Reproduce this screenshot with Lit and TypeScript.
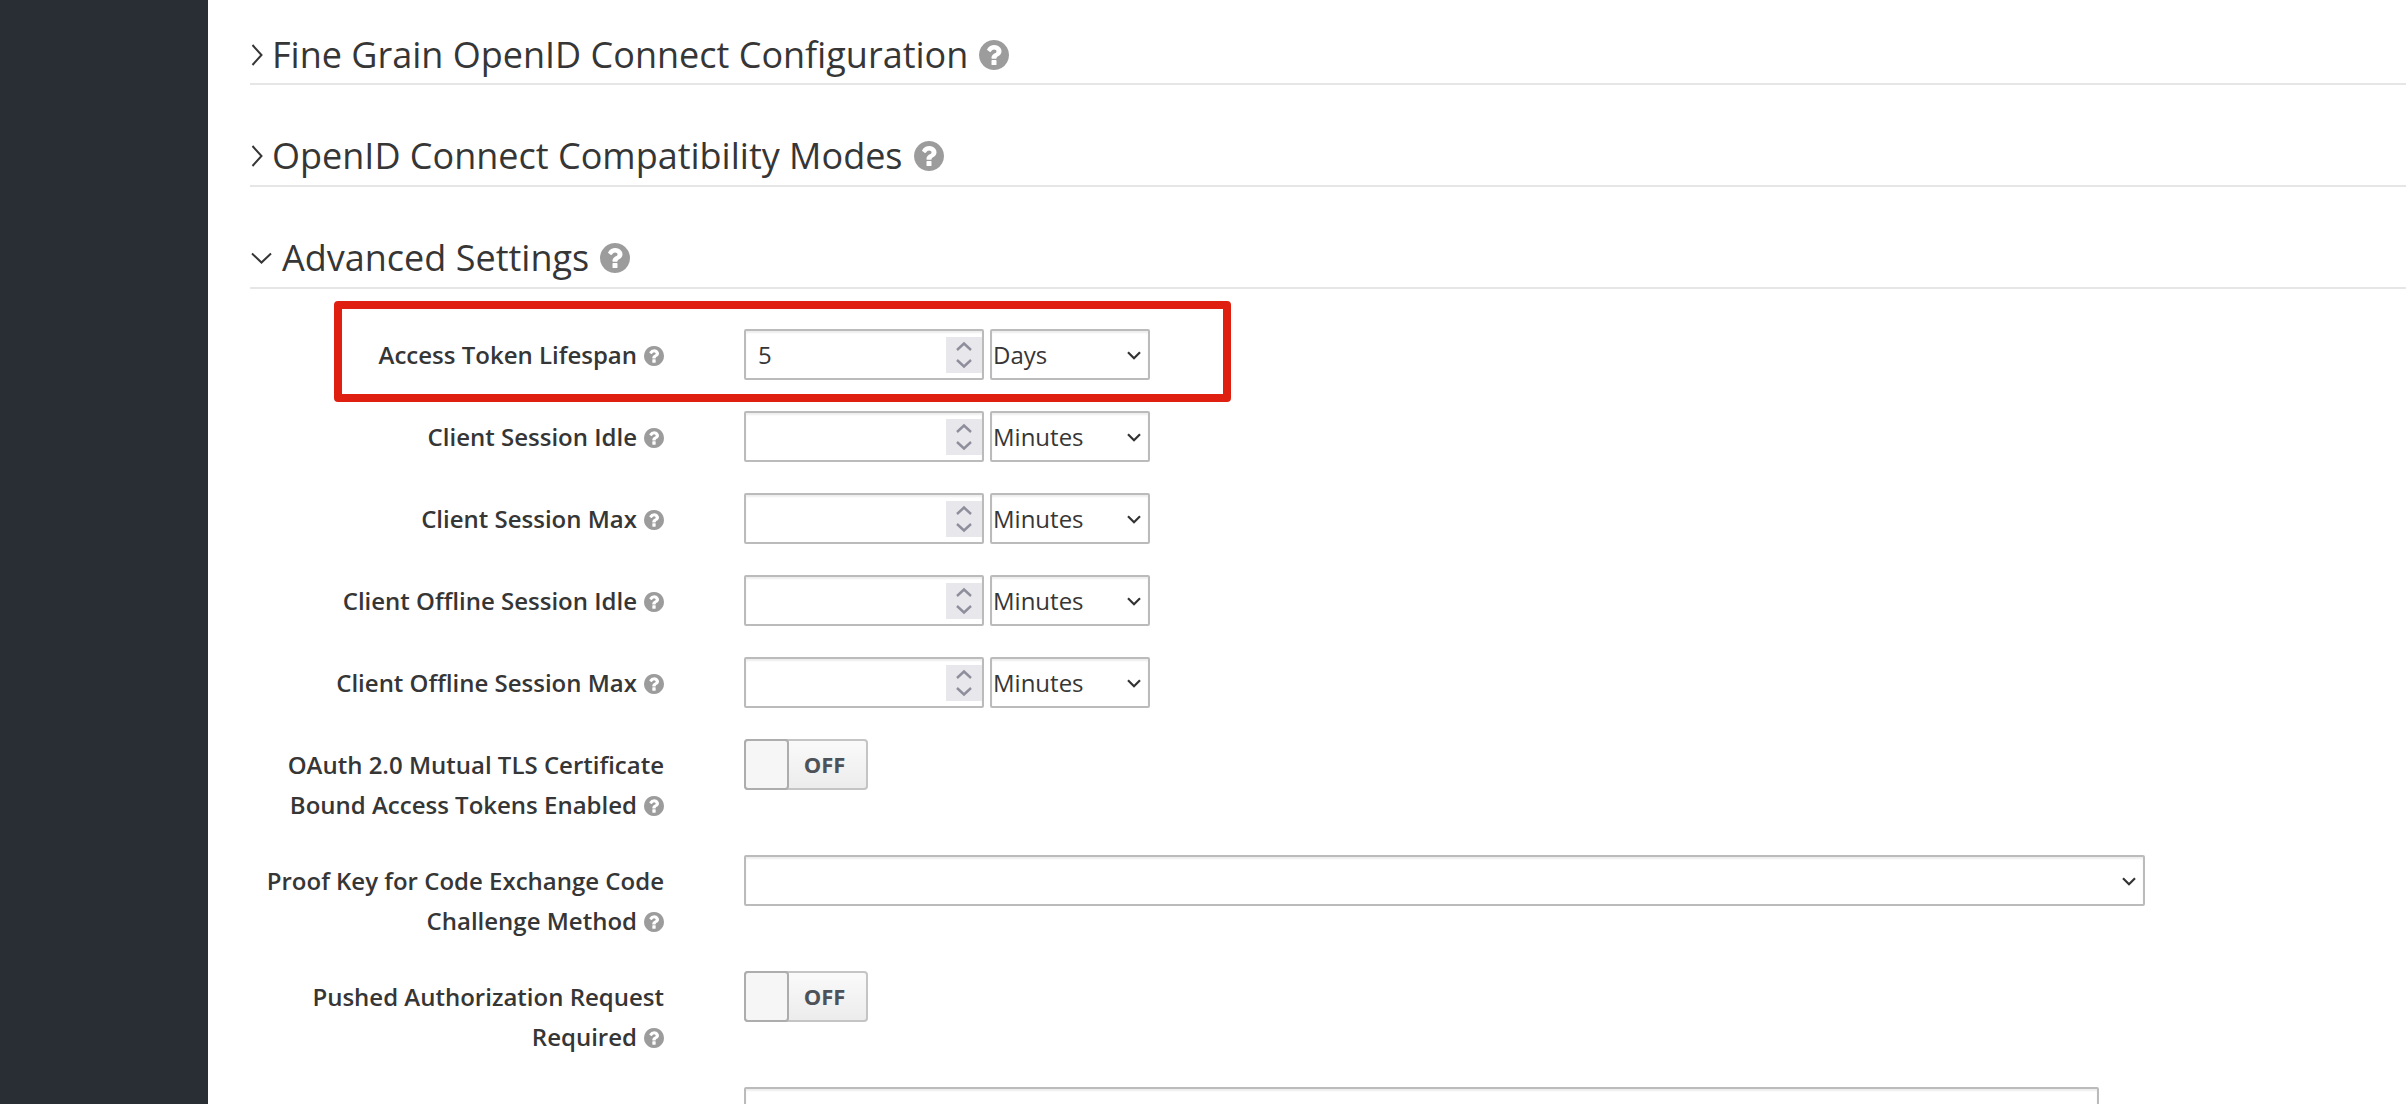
import { LitElement, html, css, svg } from "lit";
import { customElement } from "lit/decorators.js";

const help = (cls: string) => html`<svg class="help ${cls}" viewBox="0 128 1536 1536" aria-hidden="true">${svg`<path fill="currentColor" d="M896 1376v-192q0-14-9-23t-23-9h-192q-14 0-23 9t-9 23v192q0 14 9 23t23 9h192q14 0 23-9t9-23zm256-672q0-88-55.5-163t-138.5-116-170-41q-243 0-371 213-15 24 8 42l132 100q7 6 19 6 16 0 25-12 53-68 86-92 34-24 86-24 48 0 85.5 26t37.5 59q0 38-20 61t-68 45q-63 28-115.5 86.5t-52.5 125.5v36q0 14 9 23t23 9h192q14 0 23-9t9-23q0-19 21.5-49.5t54.5-49.5q32-18 49-28.5t46-35 44.5-48 28-60.5 12.5-81zm384 192q0 209-103 385.5t-279.5 279.5-385.5 103-385.5-103-279.5-279.5-103-385.5 103-385.5 279.5-279.5 385.5-103 385.5 103 279.5 279.5 103 385.5z"/>`}</svg>`;

const chevronDown = html`<svg class="sel-arrow" viewBox="0 0 14 9" aria-hidden="true"><path d="M1 1.2 7 7.2 13 1.2" fill="none" stroke="#333" stroke-width="2.2"/></svg>`;

@customElement("app-root")
export class AppRoot extends LitElement {
  static styles = css`
    :host { display: flex; width: 2406px; height: 1104px; overflow: hidden; background: #fff;
      font-family: "Open Sans", "Noto Sans", sans-serif; color: #363636; }
    .side { width: 208px; flex: none; background: #292e34; }
    .main { flex: 1; padding: 0 0 0 42px; min-width: 0; }
    .sec { display: flex; align-items: center; height: 102px; border-bottom: 2px solid #e6e6e6; box-sizing: border-box; padding-top: 41px; }
    .sec.first { height: 85px; padding-top: 27px; }
    .sec h2 { margin: 0; font-size: 36px; line-height: 50px; font-weight: 400; color: #363636; }
    .sec .chev { flex: none; display: block; }
    .chev.right { width: 12px; height: 22px; margin: 0 9px 0 1px; }
    .chev.down { width: 21px; height: 12px; margin: 0 10px 0 1px; }
    .help { color: #9c9c9c; display: inline-block; }
    .help.big { width: 30px; height: 30px; margin-left: 11px; flex: none; }
    .help.small { width: 20px; height: 20px; margin-left: 7px; vertical-align: -2px; }
    .rows { display: flex; flex-direction: column; gap: 31px; padding-top: 40px; }
    .row { display: flex; align-items: flex-start; position: relative; }
    .row.two { height: 85px; }
    .lab { width: 414px; flex: none; text-align: right; font-size: 24px; font-weight: 600; line-height: 40px; padding-top: 6px; box-sizing: border-box; color: #363636; }
    .lab.low { padding-top: 8px; }
    .ctl { margin-left: 80px; display: flex; gap: 6px; align-items: flex-start; }
    .spin { position: relative; width: 240px; height: 51px; }
    input { width: 100%; height: 100%; box-sizing: border-box; border: 2px solid #bbb; border-radius: 2px; padding: 0 12px;
      font: 400 24px "Open Sans", sans-serif; color: #363636; outline: none; box-shadow: inset 0 2px 2px rgba(0,0,0,.07);
      appearance: textfield; -moz-appearance: textfield; }
    input::-webkit-inner-spin-button, input::-webkit-outer-spin-button { -webkit-appearance: none; margin: 0; }
    .spinner { position: absolute; right: 2px; top: 8px; width: 36px; height: 36px; background: #e8e8ec; display: block; }
    .selw { position: relative; display: block; }
    select { display: block; appearance: none; -webkit-appearance: none; box-sizing: border-box; height: 51px; border: 2px solid #bbb; border-radius: 2px;
      background: #fff; padding: 0 1px; font: 400 24px "Open Sans", sans-serif; color: #363636; outline: none; box-shadow: inset 0 2px 2px rgba(0,0,0,.07); }
    .selw.unit select { width: 160px; }
    .selw.wide select { width: 1401px; }
    .sel-arrow { position: absolute; right: 9px; top: 22px; width: 14px; height: 9px; pointer-events: none; }
    .toggle { display: flex; width: 124px; height: 51px; box-sizing: border-box; border: 2px solid #c4c4c4; border-radius: 4px; background: linear-gradient(#fafafa, #ececec); }
    .knob { width: 41px; margin: -2px 0 -2px -2px; border: 2px solid #adadad; border-radius: 4px; background: #f6f6f6; box-sizing: content-box; }
    .off { flex: 1; text-align: center; font-size: 22px; line-height: 47px; font-weight: 700; color: #4d5258; padding-right: 6px; }
    .wideinput { width: 1355px; height: 60px; box-sizing: border-box; border: 2px solid #bbb; border-radius: 2px; box-shadow: inset 0 2px 2px rgba(0,0,0,.07); }
    .mark { position: absolute; left: 84px; top: -28px; width: 897px; height: 101px; box-sizing: border-box; border: 8px solid #df2010; border-radius: 4px; pointer-events: none; }
  `;

  private num(unit: string, value = "") {
    return html`<div class="ctl">
      <div class="spin">
        <input type="number" .value=${value} />
        <svg class="spinner" viewBox="0 0 36 36" aria-hidden="true"><path d="M11 13 18 6.5 25 13M11 23 18 29.5 25 23" fill="none" stroke="#8e8e9c" stroke-width="2.4"/></svg>
      </div>
      <div class="selw unit"><select><option>${unit}</option></select>${chevronDown}</div>
    </div>`;
  }

  private toggle() {
    return html`<div class="ctl"><div class="toggle"><div class="knob"></div><div class="off">OFF</div></div></div>`;
  }

  private sec(title: string, open: boolean, first = false) {
    return html`<div class="sec ${first ? "first" : ""}">
      ${open
        ? html`<svg class="chev down" viewBox="0 0 21 12" aria-hidden="true"><path d="M1 1.5 10.5 10.5 20 1.5" fill="none" stroke="#363636" stroke-width="2"/></svg>`
        : html`<svg class="chev right" viewBox="0 0 12 22" aria-hidden="true"><path d="M1.5 1 10.5 11 1.5 21" fill="none" stroke="#363636" stroke-width="2"/></svg>`}
      <h2>${title}</h2>${help("big")}
    </div>`;
  }

  render() {
    return html`
      <div class="side"></div>
      <div class="main">
        ${this.sec("Fine Grain OpenID Connect Configuration", false, true)}
        ${this.sec("OpenID Connect Compatibility Modes", false)}
        ${this.sec("Advanced Settings", true)}
        <div class="rows">
          <div class="row">
            <div class="lab">Access Token Lifespan${help("small")}</div>
            ${this.num("Days", "5")}
            <div class="mark"></div>
          </div>
          <div class="row"><div class="lab">Client Session Idle${help("small")}</div>${this.num("Minutes")}</div>
          <div class="row"><div class="lab">Client Session Max${help("small")}</div>${this.num("Minutes")}</div>
          <div class="row"><div class="lab">Client Offline Session Idle${help("small")}</div>${this.num("Minutes")}</div>
          <div class="row"><div class="lab">Client Offline Session Max${help("small")}</div>${this.num("Minutes")}</div>
          <div class="row two"><div class="lab">OAuth 2.0 Mutual TLS Certificate<br />Bound Access Tokens Enabled${help("small")}</div>${this.toggle()}</div>
          <div class="row two"><div class="lab">Proof Key for Code Exchange Code<br />Challenge Method${help("small")}</div>
            <div class="ctl"><div class="selw wide"><select><option></option></select>${chevronDown}</div></div></div>
          <div class="row two"><div class="lab">Pushed Authorization Request<br />Required${help("small")}</div>${this.toggle()}</div>
          <div class="row"><div class="lab low">ACR to LoA Mapping${help("small")}</div>
            <div class="ctl"><div class="wideinput"></div></div></div>
        </div>
      </div>
    `;
  }
}
